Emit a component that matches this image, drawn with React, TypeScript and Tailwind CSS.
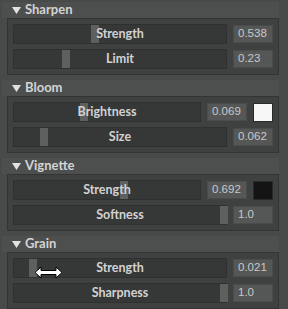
import React from "react";

type Row = { label: string; value: string; pos: number; swatch?: string };
type Section = { title: string; rows: Row[] };

const SECTIONS: Section[] = [
  {
    title: "Sharpen",
    rows: [
      { label: "Strength", value: "0.538", pos: 77 },
      { label: "Limit", value: "0.23", pos: 48 },
    ],
  },
  {
    title: "Bloom",
    rows: [
      { label: "Brightness", value: "0.069", pos: 66, swatch: "#f7f7f7" },
      { label: "Size", value: "0.062", pos: 26 },
    ],
  },
  {
    title: "Vignette",
    rows: [
      { label: "Strength", value: "0.692", pos: 106, swatch: "#141414" },
      { label: "Softness", value: "1.0", pos: 206 },
    ],
  },
  {
    title: "Grain",
    rows: [
      { label: "Strength", value: "0.021", pos: 15 },
      { label: "Sharpness", value: "1.0", pos: 206 },
    ],
  },
];

function Slider({ row }: { row: Row }) {
  return (
    <div className="flex items-center gap-[6px]">
      <div className="relative flex-1 h-[20px] bg-[#363838] border border-[#2f3131] flex items-center justify-center">
        {/* thumb */}
        <div
          className="absolute top-0 bottom-0 w-[8px] bg-[#5e6060]"
          style={{ left: row.pos }}
        />
        <span className="relative text-[12.5px] font-bold text-[#d2d2d2]">{row.label}</span>
      </div>
      <div className="w-[40px] h-[18px] bg-[#555757] border border-[#4a4c4c] flex items-center pl-[4px] text-[11.5px] text-[#c9c9c9] font-['Liberation_Sans',sans-serif]">
        {row.value}
      </div>
      {row.swatch ? (
        <div className="w-[20px] h-[19px] border border-[#2a2a2a]" style={{ background: row.swatch }} />
      ) : null}
    </div>
  );
}

export default function App() {
  return (
    <div className="relative w-[288px] h-[309px] overflow-hidden bg-[#484a4a] pl-[2px] pr-[9px] pt-[2px] font-['Lato',sans-serif]">
      <div className="flex flex-col gap-[5px]">
        {SECTIONS.map((s) => (
          <div key={s.title}>
            <div className="h-[16px] bg-[#4d4f4f] flex items-center pl-[10px] gap-[4px] text-[13px] font-bold text-[#d4d4d4]">
              <svg width="9" height="7" viewBox="0 0 9 7">
                <path d="M0 0 L9 0 L4.5 7 Z" fill="#e2e2e2" />
              </svg>
              {s.title}
            </div>
            <div className="ml-[5px] border border-[#333535] bg-[#3f4141] p-[5px] flex flex-col gap-[5px]">
              {s.rows.map((r) => (
                <Slider key={r.label} row={r} />
              ))}
            </div>
          </div>
        ))}
      </div>

      {/* mouse cursor (horizontal resize) */}
      <svg className="absolute left-[34px] top-[266px]" width="30" height="13" viewBox="0 0 30 13">
        <path
          d="M1 6.5 L7 1 L7 4.5 L22 4.5 L22 1 L28 6.5 L22 12 L22 8.5 L7 8.5 L7 12 Z"
          fill="#ffffff"
          stroke="#000000"
          strokeWidth="1"
        />
      </svg>
    </div>
  );
}
